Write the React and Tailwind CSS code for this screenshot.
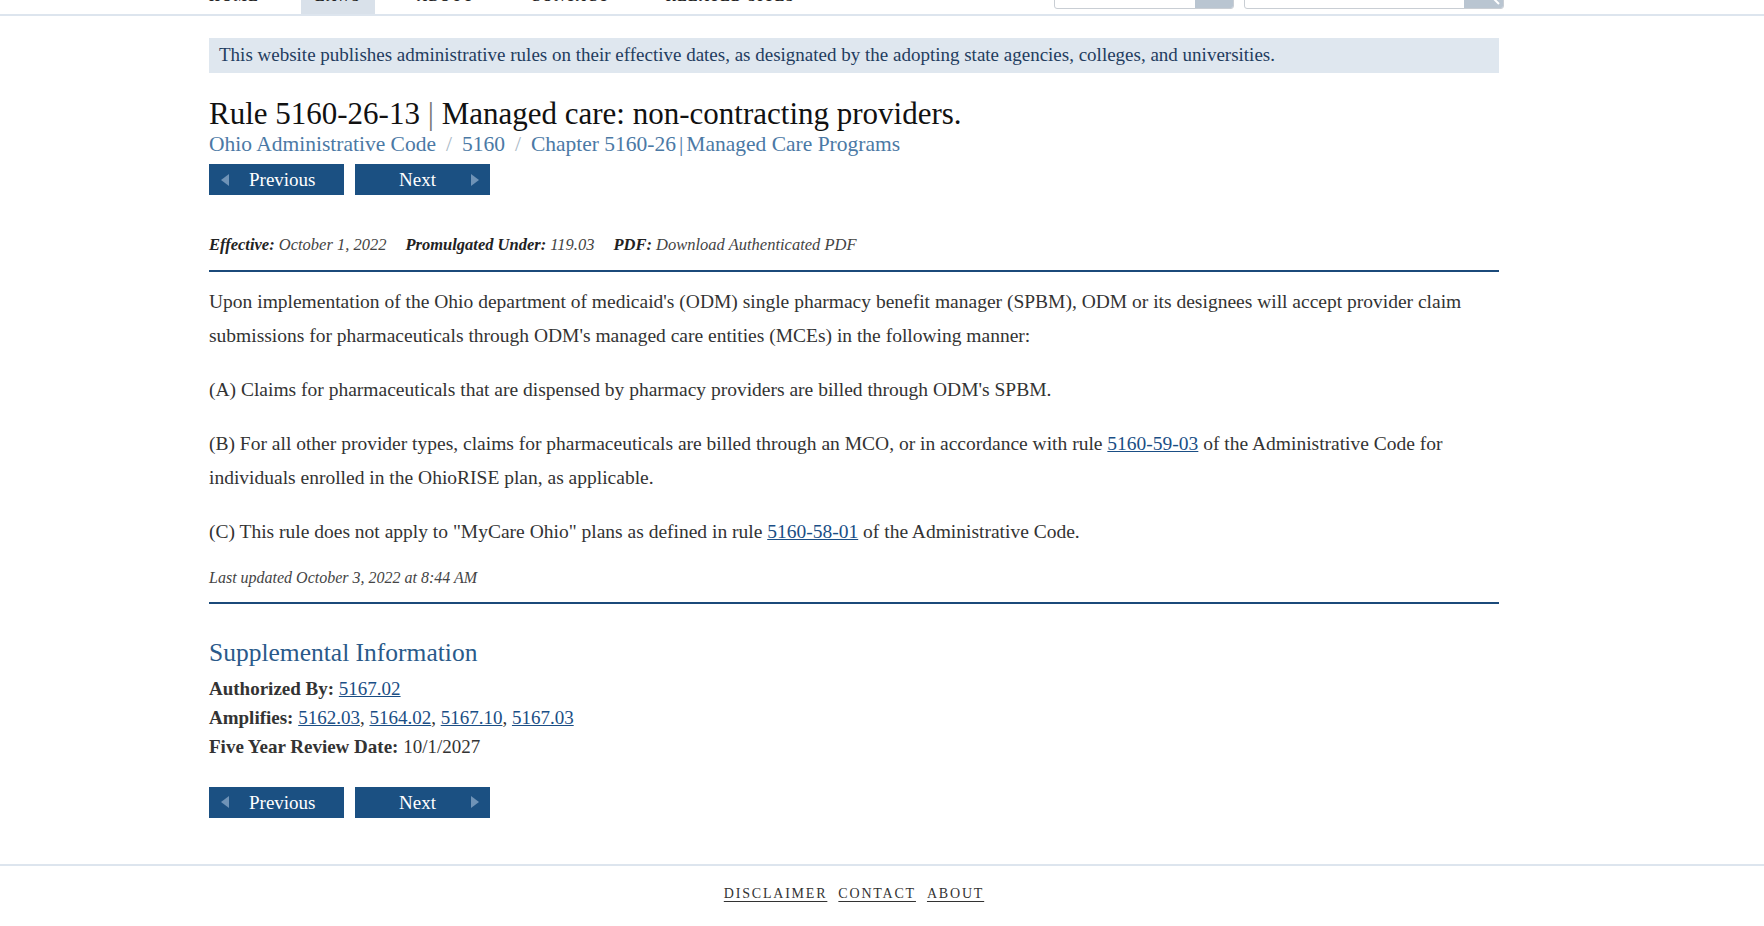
import React from "react";

const serif = { fontFamily: '"Liberation Serif", "Times New Roman", serif' };

function NavButtons() {
  return (
    <div className="flex gap-[11px]">
      <a className="flex items-center h-[31px] w-[135px] bg-[#1b5082] text-white text-[19px] leading-none">
        <svg width="8" height="12" viewBox="0 0 8 12" className="ml-[12px]">
          <polygon points="8,0 0,6 8,12" fill="#6f93b7" />
        </svg>
        <span className="ml-[20px]">Previous</span>
      </a>
      <a className="flex items-center h-[31px] w-[135px] bg-[#1b5082] text-white text-[19px] leading-none">
        <span className="ml-[44px]">Next</span>
        <svg width="8" height="12" viewBox="0 0 8 12" className="ml-auto mr-[11px]">
          <polygon points="0,0 8,6 0,12" fill="#6f93b7" />
        </svg>
      </a>
    </div>
  );
}

export default function App() {
  const navItems = ["HOME", "LAWS", "ABOUT", "CONTACT", "RELATED SITES"];
  return (
    <div className="min-h-[926px] bg-white text-[#333]" style={serif}>
      {/* header (scrolled, mostly cut off) */}
      <div className="h-[16px] overflow-hidden border-b-2 border-[#dde5ee]">
        <div className="ml-[209px] w-[1295px] flex justify-between h-full">
          <div className="flex -ml-[14px] gap-[28px] h-full">
            {navItems.map((n) => (
              <div
                key={n}
                className={
                  "h-full px-[14px] flex flex-col " +
                  (n === "LAWS" ? "bg-[#d9e1ea]" : "")
                }
              >
                <span className="-mt-[10px] leading-[14px] text-[14px] font-bold tracking-[1.5px] text-[#222]">
                  {n}
                </span>
              </div>
            ))}
          </div>
          <div className="flex gap-[10px] items-start">
            <div className="-mt-[20px] h-[29px] w-[180px] border border-[#c9ced4] rounded-[3px] flex overflow-hidden bg-white">
              <div className="flex-1" />
              <div className="w-[38px] bg-[#b9c5d1]" />
            </div>
            <div className="-mt-[20px] h-[29px] w-[260px] border border-[#c9ced4] rounded-[3px] flex overflow-hidden bg-white">
              <div className="flex-1" />
              <div className="w-[39px] bg-[#b9c5d1] flex items-end justify-end pr-[3px] pb-[3px]">
                <svg width="8" height="8" viewBox="0 0 8 8">
                  <line x1="0" y1="0" x2="7" y2="7" stroke="#ffffff" strokeWidth="2" />
                </svg>
              </div>
            </div>
          </div>
        </div>
      </div>

      <div className="ml-[209px] w-[1290px]">
        {/* notice */}
        <div className="mt-[22px] h-[35px] bg-[#dfe7ef] flex items-center px-[10px] text-[19px] text-[#1f3d60]">
          This website publishes administrative rules on their effective dates, as designated by the adopting state agencies, colleges, and universities.
        </div>

        {/* title */}
        <h1 className="mt-[24px] text-[31px] leading-[34px] text-[#111]">
          Rule 5160-26-13 <span className="text-[#777] font-light">|</span> Managed care: non-contracting providers.
        </h1>
        <div className="mt-[-2px] text-[21.5px] leading-[30px] text-[#4b79a5]">
          <a>Ohio Administrative Code</a>
          <span className="mx-[10px] text-[#a9b8c6]">/</span>
          <a>5160</a>
          <span className="mx-[10px] text-[#a9b8c6]">/</span>
          <a>Chapter 5160-26</a>
          <span className="mx-[3px]">|</span>
          <a>Managed Care Programs</a>
        </div>
        <div className="mt-[5px]">
          <NavButtons />
        </div>

        {/* meta */}
        <div className="mt-[38px] text-[16.5px] italic text-[#444] flex gap-[19px]">
          <span>
            <b className="text-[#222]">Effective:</b> October 1, 2022
          </span>
          <span>
            <b className="text-[#222]">Promulgated Under:</b> 119.03
          </span>
          <span>
            <b className="text-[#222]">PDF:</b> <a>Download Authenticated PDF</a>
          </span>
        </div>
        <div className="mt-[12px] h-[2px] bg-[#1b4a7a]" />

        {/* body */}
        <div className="mt-[13px] text-[19.5px] leading-[34px] text-[#333]">
          <p className="mb-[20px]">
            Upon implementation of the Ohio department of medicaid's (ODM) single pharmacy benefit manager (SPBM), ODM or its designees will accept provider claim submissions for pharmaceuticals through ODM's managed care entities (MCEs) in the following manner:
          </p>
          <p className="mb-[20px]">
            (A) Claims for pharmaceuticals that are dispensed by pharmacy providers are billed through ODM's SPBM.
          </p>
          <p className="mb-[20px]">
            (B) For all other provider types, claims for pharmaceuticals are billed through an MCO, or in accordance with rule{" "}
            <a className="underline text-[#1a4e85]">5160-59-03</a> of the Administrative Code for individuals enrolled in the OhioRISE plan, as applicable.
          </p>
          <p className="mb-[18px]">
            (C) This rule does not apply to "MyCare Ohio" plans as defined in rule{" "}
            <a className="underline text-[#1a4e85]">5160-58-01</a> of the Administrative Code.
          </p>
        </div>
        <div className="text-[16px] italic text-[#444] leading-[22px]">
          Last updated October 3, 2022 at 8:44 AM
        </div>
        <div className="mt-[13px] h-[2px] bg-[#1b4a7a]" />

        {/* supplemental */}
        <h2 className="mt-[34px] text-[25.5px] leading-[30px] text-[#2a5a8a]">
          Supplemental Information
        </h2>
        <div className="mt-[6px] text-[19px] leading-[29px] text-[#333]">
          <div>
            <b>Authorized By:</b> <a className="underline text-[#1a4e85]">5167.02</a>
          </div>
          <div>
            <b>Amplifies:</b> <a className="underline text-[#1a4e85]">5162.03</a>,{" "}
            <a className="underline text-[#1a4e85]">5164.02</a>,{" "}
            <a className="underline text-[#1a4e85]">5167.10</a>,{" "}
            <a className="underline text-[#1a4e85]">5167.03</a>
          </div>
          <div>
            <b>Five Year Review Date:</b> 10/1/2027
          </div>
        </div>
        <div className="mt-[26px]">
          <NavButtons />
        </div>
      </div>

      {/* footer */}
      <div className="mt-[46px] border-t-2 border-[#dde5ee]">
        <div className="ml-[209px] w-[1290px] flex justify-center gap-[11px] pt-[17px] text-[14px] tracking-[1.8px] text-[#333]">
          <a className="underline underline-offset-[3px]">DISCLAIMER</a>
          <a className="underline underline-offset-[3px]">CONTACT</a>
          <a className="underline underline-offset-[3px]">ABOUT</a>
        </div>
      </div>
    </div>
  );
}
